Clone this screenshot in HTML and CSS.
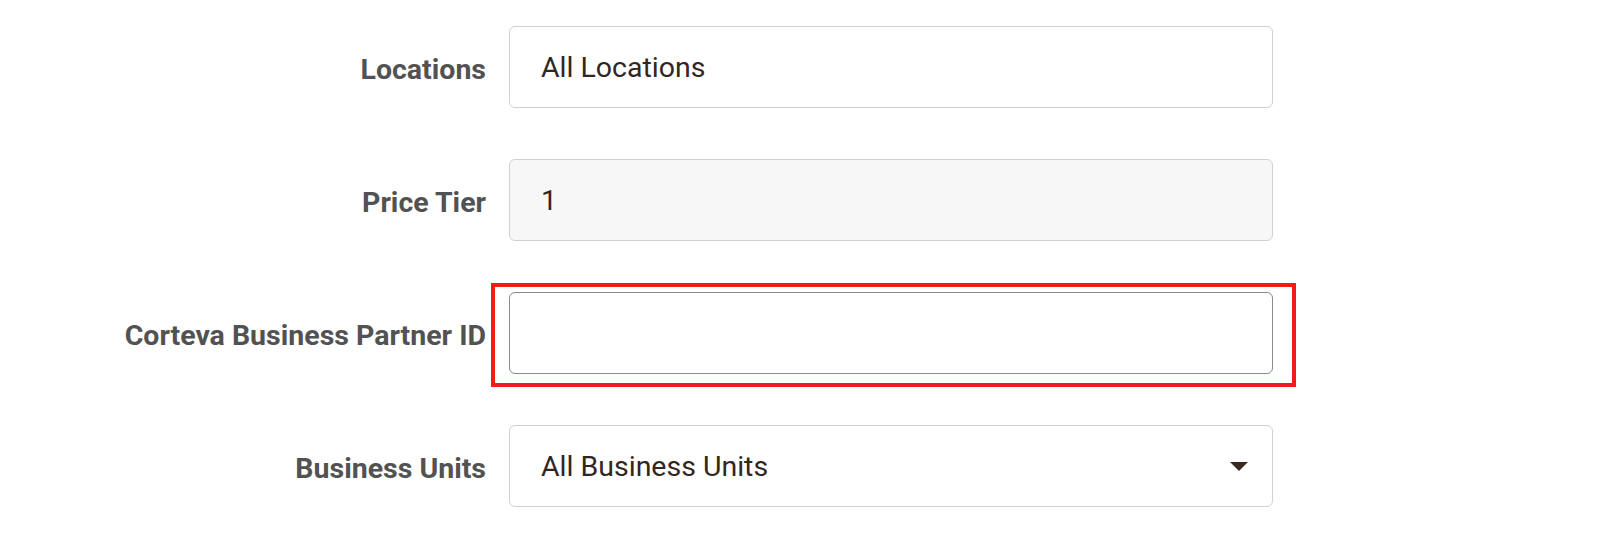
FILE: index.html
```html
<!DOCTYPE html>
<html lang="en">
<head>
    <meta charset="UTF-8">
    <meta name="viewport" content="width=device-width, initial-scale=1.0">
    <title>Account Settings</title>
    <link rel="stylesheet" href="styles.css">
</head>
<body>
    <form class="settings-form">
        <label class="field-label" for="locations">Locations</label>
        <div class="field">
            <input type="text" id="locations" class="field-input" value="All Locations">
        </div>

        <label class="field-label" for="price-tier">Price Tier</label>
        <div class="field">
            <input type="text" id="price-tier" class="field-input readonly" value="1" readonly>
        </div>

        <label class="field-label" for="partner-id">Corteva Business Partner ID</label>
        <div class="field">
            <input type="text" id="partner-id" class="field-input active">
            <div class="highlight"></div>
        </div>

        <label class="field-label" for="business-units">Business Units</label>
        <div class="field">
            <div class="field-input select" id="business-units">
                <span>All Business Units</span>
                <span class="caret"></span>
            </div>
        </div>
    </form>
</body>
</html>
```

FILE: styles.css
```css
body {
    margin: 0;
    background: #fff;
    font-family: Roboto, "Liberation Sans", Arial, sans-serif;
}
.settings-form {
    display: grid;
    grid-template-columns: 486px 764px;
    column-gap: 23px;
    row-gap: 51px;
    align-items: center;
    padding-top: 26px;
}
.field-label {
    text-align: right;
    font-size: 28.5px;
    font-weight: 700;
    color: #525252;
    padding-top: 4px;
}
.field {
    position: relative;
}
.field-input {
    display: flex;
    align-items: center;
    justify-content: space-between;
    box-sizing: border-box;
    width: 100%;
    height: 82px;
    margin: 0;
    padding: 0 24px 0 31px;
    border: 1px solid #d0d0d0;
    border-radius: 6px;
    background: #fff;
    font-family: inherit;
    font-size: 28.5px;
    color: #33261f;
    outline: none;
}
.field-input.readonly { background: #f7f7f7; }
.field-input.active { border-color: #8a8a8a; }
.caret {
    width: 0;
    height: 0;
    border-left: 9px solid transparent;
    border-right: 9px solid transparent;
    border-top: 9px solid #3a2b22;
}
.highlight {
    position: absolute;
    left: -18px;
    top: -9px;
    width: 805px;
    height: 104px;
    box-sizing: border-box;
    border: 4px solid #f5191a;
    pointer-events: none;
}
```
